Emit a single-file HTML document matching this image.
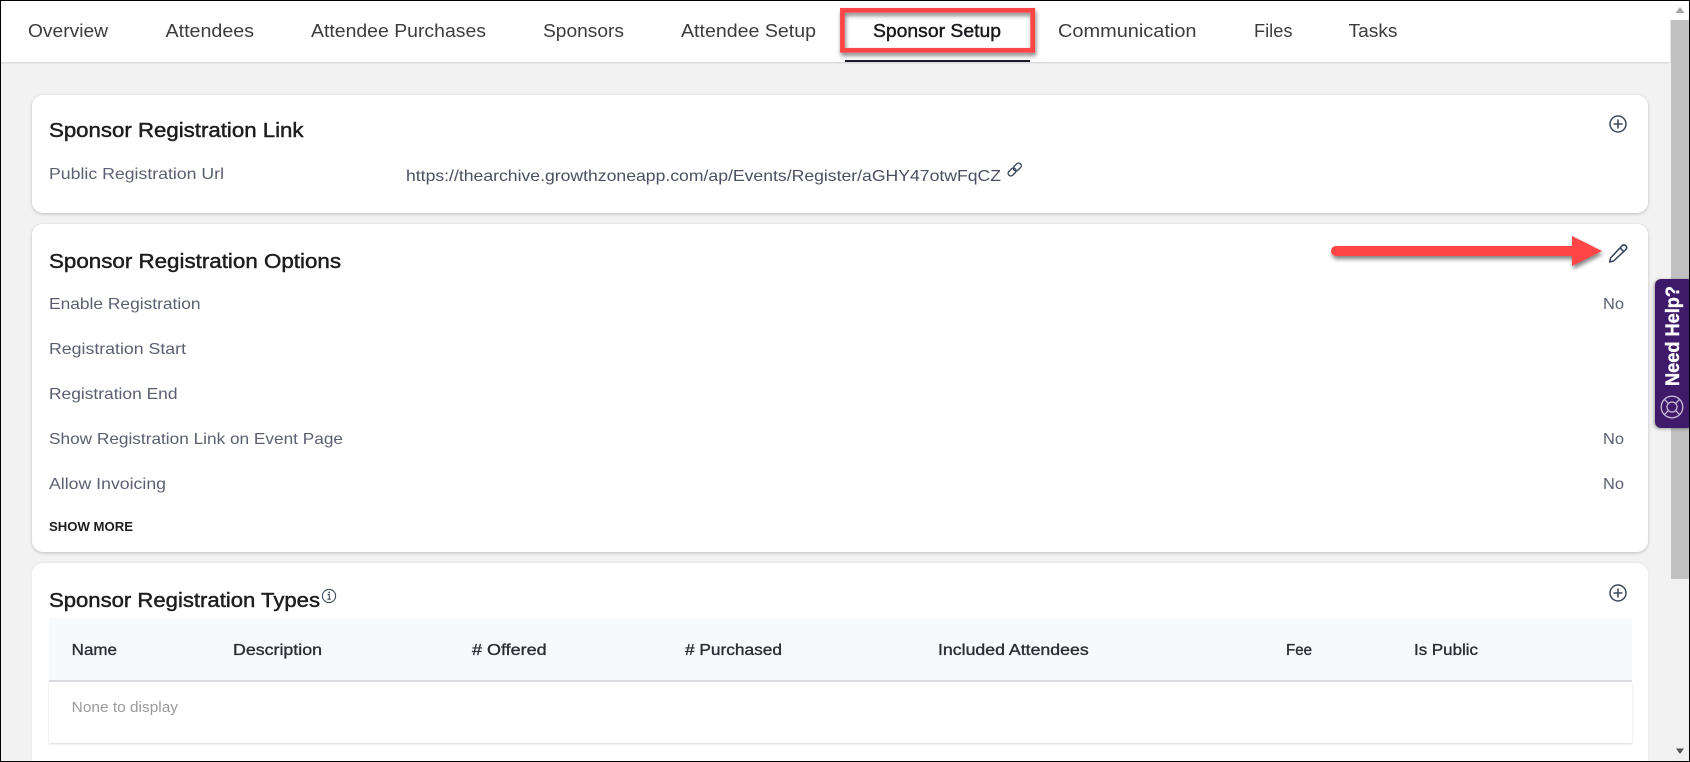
<!DOCTYPE html>
<html lang="en">
<head>
<meta charset="utf-8">
<title>Sponsor Setup</title>
<style>
html{margin:0;padding:0;width:1690px;height:762px;overflow:hidden;background:#f2f2f2}
body{margin:0;padding:0;background:#f2f2f2;position:relative;width:1690px;height:762px;overflow:hidden;font-family:"Liberation Sans",sans-serif}
.tabbar{position:absolute;left:0;top:0;width:1670px;height:62px;background:#fff;box-shadow:0 1px 2px rgba(0,0,0,.14)}
.card{position:absolute;left:32px;width:1616px;background:#fff;border-radius:11px;box-shadow:0 1px 3px rgba(0,0,0,.22)}
.card3{position:absolute;left:32px;top:563px;width:1616px;height:199px;background:#fff;border-radius:11px 11px 0 0;box-shadow:0 -1px 2px rgba(0,0,0,.05)}
.thead{position:absolute;left:49px;top:618px;width:1583px;height:62px;background:#f7fafd}
.tline{position:absolute;left:49px;top:680px;width:1583px;height:2px;background:#dcdce0}
.tbody{position:absolute;left:49px;top:682px;width:1583px;height:61px;background:#fff;box-shadow:0 1px 2px rgba(0,0,0,.16)}
.sb{position:absolute;left:1671px;top:0;width:18px;height:762px;background:#f1f1f1}
.sbt{position:absolute;left:1671px;top:20px;width:18px;height:559px;background:#c1c1c1}
.sbw{position:absolute;left:1670px;top:0;width:19px;height:20px;background:#fff}
.help{position:absolute;left:1655px;top:279px;width:35px;height:149px;background:#3f1a6b;border-radius:6px 0 0 6px;box-shadow:-1px 1px 3px rgba(0,0,0,.35)}
svg{position:absolute;left:0;top:0}
.frame{position:absolute;left:0;top:0;width:1688px;height:760px;border:1px solid #000;pointer-events:none}
.tab{font-size:18px;fill:#3c3c3c}
.ttl{font-size:20px;fill:#1d1d1f;stroke:#1d1d1f;stroke-width:.45px}
.lbl{font-size:16px;fill:#5a6070}
.th{font-size:15.5px;fill:#2a2d33;stroke:#2a2d33;stroke-width:.35px}
</style>
</head>
<body>
<div class="tabbar"></div>
<div class="card" style="top:95px;height:118px"></div>
<div class="card" style="top:224px;height:328px"></div>
<div class="card3"></div>
<div class="thead"></div>
<div class="tline"></div>
<div class="tbody"></div>
<div class="sb"></div>
<div class="sbw"></div>
<div class="sbt"></div>
<div class="help"></div>

<svg width="1690" height="762" viewBox="0 0 1690 762" xmlns="http://www.w3.org/2000/svg">
<defs>
<filter id="ds" x="-10%" y="-30%" width="120%" height="170%">
<feDropShadow dx="1" dy="3" stdDeviation="2.2" flood-color="#000" flood-opacity=".5"/>
</filter>
</defs>

<!-- tabs -->
<text class="tab" x="28" y="37" textLength="80" lengthAdjust="spacingAndGlyphs">Overview</text>
<text class="tab" x="165.5" y="37" textLength="88.5" lengthAdjust="spacingAndGlyphs">Attendees</text>
<text class="tab" x="311" y="37" textLength="175" lengthAdjust="spacingAndGlyphs">Attendee Purchases</text>
<text class="tab" x="543" y="37" textLength="81" lengthAdjust="spacingAndGlyphs">Sponsors</text>
<text class="tab" x="681" y="37" textLength="135" lengthAdjust="spacingAndGlyphs">Attendee Setup</text>
<text class="tab" x="873" y="37" textLength="128" lengthAdjust="spacingAndGlyphs" style="fill:#17181c;stroke:#17181c;stroke-width:.4px">Sponsor Setup</text>
<text class="tab" x="1058" y="37" textLength="138.5" lengthAdjust="spacingAndGlyphs">Communication</text>
<text class="tab" x="1254" y="37" textLength="38.5" lengthAdjust="spacingAndGlyphs">Files</text>
<text class="tab" x="1348.5" y="37" textLength="49" lengthAdjust="spacingAndGlyphs">Tasks</text>
<rect x="845" y="60" width="185" height="2" fill="#1c1c28"/>
<rect x="842.4" y="10.3" width="190.3" height="40" fill="none" stroke="#ff4444" stroke-width="4.7" filter="url(#ds)"/>

<!-- card 1 -->
<text class="ttl" x="49" y="137" textLength="254.5" lengthAdjust="spacingAndGlyphs">Sponsor Registration Link</text>
<text class="lbl" x="49" y="179" textLength="175" lengthAdjust="spacingAndGlyphs">Public Registration Url</text>
<text class="lbl" x="406" y="181" textLength="595" lengthAdjust="spacingAndGlyphs" style="fill:#4a5060">https://thearchive.growthzoneapp.com/ap/Events/Register/aGHY47otwFqCZ</text>
<g fill="none" stroke="#3d4a5e" stroke-width="1.4">
<rect x="1007.6" y="169.3" width="9" height="5.4" rx="2.7" transform="rotate(-45 1012.1 172)"/>
<rect x="1012.8" y="164.3" width="9" height="5.4" rx="2.7" transform="rotate(-45 1017.3 167)"/>
<circle cx="1618" cy="124" r="8" stroke-width="1.5"/>
<path d="M1618 119.5v9M1613.5 124h9" stroke-width="1.6"/>
</g>

<!-- card 2 -->
<text class="ttl" x="49" y="268" textLength="292" lengthAdjust="spacingAndGlyphs">Sponsor Registration Options</text>
<text class="lbl" x="49" y="309" textLength="151.5" lengthAdjust="spacingAndGlyphs">Enable Registration</text>
<text class="lbl" x="49" y="354" textLength="137" lengthAdjust="spacingAndGlyphs">Registration Start</text>
<text class="lbl" x="49" y="399" textLength="128.5" lengthAdjust="spacingAndGlyphs">Registration End</text>
<text class="lbl" x="49" y="444" textLength="294" lengthAdjust="spacingAndGlyphs">Show Registration Link on Event Page</text>
<text class="lbl" x="49" y="489" textLength="117" lengthAdjust="spacingAndGlyphs">Allow Invoicing</text>
<text x="49" y="531" textLength="84" lengthAdjust="spacingAndGlyphs" style="font-size:13px;font-weight:700;fill:#1d1d1f">SHOW MORE</text>
<text class="lbl" x="1603" y="309" textLength="21" lengthAdjust="spacingAndGlyphs">No</text>
<text class="lbl" x="1603" y="444" textLength="21" lengthAdjust="spacingAndGlyphs">No</text>
<text class="lbl" x="1603" y="489" textLength="21" lengthAdjust="spacingAndGlyphs">No</text>

<!-- pencil -->
<path d="M1622 245.8q1.9-1.9 3.8 0t0 3.8L1613.6 261 1609.6 262 1610.6 258Z M1620 247.8l3.9 3.9" fill="none" stroke="#34405a" stroke-width="1.5" stroke-linejoin="round"/>

<!-- arrow -->
<g filter="url(#ds)">
<path d="M1336 246H1572V236L1602 251 1572 266V256H1336A5 5 0 0 1 1336 246Z" fill="#ff4444"/>
</g>

<!-- card 3 -->
<text class="ttl" x="49" y="607" textLength="271" lengthAdjust="spacingAndGlyphs">Sponsor Registration Types</text>
<g fill="none" stroke="#3d4a5e">
<circle cx="329" cy="596" r="6.6" stroke-width="1.1"/>
<path d="M327.6 594.6h1.7v4.4M327.4 599.2h3.4" stroke-width="1.1"/>
<circle cx="329.2" cy="592.4" r=".5" stroke-width=".9"/>
<circle cx="1618" cy="593" r="8" stroke-width="1.5"/>
<path d="M1618 588.5v9M1613.5 593h9" stroke-width="1.6"/>
</g>
<text class="th" x="71.7" y="655" textLength="45.3" lengthAdjust="spacingAndGlyphs">Name</text>
<text class="th" x="233" y="655" textLength="89" lengthAdjust="spacingAndGlyphs">Description</text>
<text class="th" x="472" y="655" textLength="74.6" lengthAdjust="spacingAndGlyphs"># Offered</text>
<text class="th" x="685" y="655" textLength="97" lengthAdjust="spacingAndGlyphs"># Purchased</text>
<text class="th" x="938" y="655" textLength="150.7" lengthAdjust="spacingAndGlyphs">Included Attendees</text>
<text class="th" x="1286" y="655" textLength="26" lengthAdjust="spacingAndGlyphs">Fee</text>
<text class="th" x="1414" y="655" textLength="64" lengthAdjust="spacingAndGlyphs">Is Public</text>
<text x="71.7" y="712" textLength="106.3" lengthAdjust="spacingAndGlyphs" style="font-size:14.5px;fill:#9a9a9a">None to display</text>

<!-- scrollbar arrows -->
<path d="M1680 7l-4.5 6h9z" fill="#a6a6a6"/>
<path d="M1680 754l-4 -5.5h8z" fill="#505050"/>

<!-- need help -->
<text transform="translate(1679 386) rotate(-90)" textLength="100" lengthAdjust="spacingAndGlyphs" style="font-size:19px;font-weight:700;fill:#fff;stroke:#fff;stroke-width:.4px">Need Help?</text>
<g fill="none" stroke="#c9bcd8" stroke-width="1.3">
<circle cx="1672" cy="407" r="10.8"/>
<circle cx="1672" cy="407" r="5"/>
<path d="M1664.4 399.4l3.9 3.9M1679.6 399.4l-3.9 3.9M1664.4 414.6l3.9-3.9M1679.6 414.6l-3.9-3.9"/>
</g>
</svg>
<div class="frame"></div>
</body>
</html>
